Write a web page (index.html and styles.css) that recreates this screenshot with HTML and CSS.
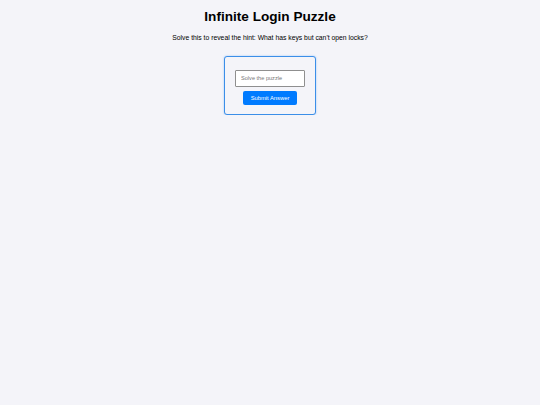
FILE: index.html
```html
<!DOCTYPE html>
<html>
<head>
<meta charset="utf-8">
<link rel="stylesheet" href="styles.css">
</head>
<body>
<h1 class="title">Infinite Login Puzzle</h1>
<p class="hint">Solve this to reveal the hint: What has keys but can't open locks?</p>
<div class="card">
  <input class="answer" type="text" placeholder="Solve the puzzle">
  <button class="submit">Submit Answer</button>
</div>
</body>
</html>
```
FILE: styles.css
```css
html, body {
  margin: 0;
  padding: 0;
  background: #f4f4f9;
}
body {
  font-family: "Liberation Sans", Arial, sans-serif;
  color: #000;
  display: flex;
  flex-direction: column;
  align-items: center;
  padding-top: 8px;
}
.title {
  font-size: 13.6px;
  font-weight: bold;
  margin: 0;
  line-height: 17px;
}
.hint {
  font-size: 6.8px;
  margin: 8px 0 0 0;
  line-height: 10px;
}
.card {
  margin-top: 13px;
  width: 92px;
  height: 59px;
  box-sizing: border-box;
  border: 1.5px solid #3b8ee8;
  border-radius: 3px;
  box-shadow: 0 0 2px rgba(0,123,255,0.4);
  background: #f4f4f9;
  display: flex;
  flex-direction: column;
  align-items: center;
  padding-top: 12.5px;
  gap: 4px;
}
.answer {
  width: 70px;
  height: 17px;
  box-sizing: border-box;
  border: 1px solid #8f8f8f;
  border-radius: 1px;
  background: #fff;
  font-family: "Liberation Sans", Arial, sans-serif;
  font-size: 5.6px;
  padding: 0 5px;
  margin: 0;
}
.answer::placeholder {
  color: #777;
}
.submit {
  width: 54px;
  height: 14px;
  box-sizing: border-box;
  border: none;
  border-radius: 2px;
  background: #007bff;
  color: #fff;
  font-family: "Liberation Sans", Arial, sans-serif;
  font-size: 5.8px;
  padding: 0;
  margin: 0;
}
```
